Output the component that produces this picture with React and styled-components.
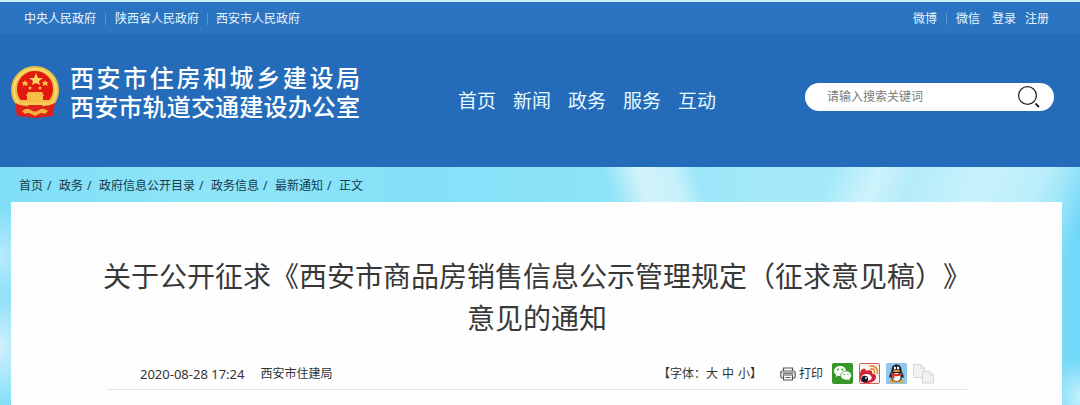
import React from "react";
import styled, { createGlobalStyle } from "styled-components";

const GlobalStyle = createGlobalStyle`
  * {
    box-sizing: border-box;
  }

  body {
    margin: 0;
    font-family: "Noto Sans", "Noto Sans CJK SC", sans-serif;
    font-size: 12px;
    line-height: 18px;
    color: #333333;
    overflow-x: hidden;
    text-spacing-trim: space-all;
  }

  a {
    color: inherit;
    text-decoration: none;
  }
`;

const Page = styled.div`
  min-height: 100vh;
  display: flex;
  flex-direction: column;
`;

const Header = styled.header`
  background-color: #246cba;
  border-top: 2px solid #c9eefb;
  color: #ffffff;
`;

const TopBar = styled.div`
  display: flex;
  justify-content: space-between;
  align-items: center;
  height: 32px;
  padding: 2px 31px 0 24px;
  background-color: #2b74c1;
  color: #e9f6ff;
`;

const TopLinks = styled.nav`
  display: flex;
  align-items: center;
`;

const TopLink = styled.a`
  margin-left: ${props => props.$gap || "0"};
`;

const Separator = styled.span`
  width: 1px;
  height: 12px;
  margin: 0 ${props => (props.$wide ? "9px" : "8px")};
  background-color: #5c96d3;
`;

const Banner = styled.div`
  display: flex;
  align-items: center;
  height: 133px;
  padding: 0 26px 8px 10px;
`;

const Brand = styled.a`
  display: flex;
  align-items: center;
  gap: 10px;
  padding-bottom: 10px;
`;

const BrandNames = styled.div`
  width: 290px;
`;

const BrandName = styled.div`
  font-size: 24px;
  line-height: 29px;
  font-weight: 500;
  text-align: justify;
  text-align-last: justify;
`;

const MainNav = styled.nav`
  display: flex;
  gap: 17px;
  margin-left: 98px;
  padding-top: 8px;
`;

const MainLink = styled.a`
  font-size: 19px;
  line-height: 24px;
  color: #e6fbff;
`;

const SearchForm = styled.form`
  display: flex;
  align-items: center;
  width: 249px;
  height: 28px;
  margin-left: auto;
  padding: 0 14px 0 22px;
  border-radius: 14px;
  background-color: #ffffff;
`;

const SearchInput = styled.input`
  flex: 1;
  min-width: 0;
  padding: 0;
  border: 0;
  outline: 0;
  background: transparent;
  font: inherit;

  &::placeholder {
    color: #7b7b7b;
    opacity: 1;
  }
`;

const PlainButton = styled.button`
  display: flex;
  align-items: center;
  padding: 0;
  border: 0;
  background: none;
  color: inherit;
  font: inherit;
  cursor: pointer;
`;

const Sky = styled.div`
  flex: 1;
  display: flex;
  flex-direction: column;
  padding: 0 18px 0 11px;
  background:
    linear-gradient(70deg, transparent 59%, #d3f2fa 62%, #c6f1fb 65%, transparent 67%),
    linear-gradient(115deg, transparent 70%, #cdf3fb 74%, #b4ecfa 77%, #c9f3fb 83%, #b9eefa 88%, transparent 93%),
    radial-gradient(ellipse 40px 50px at 0 90px, #b6eafd, transparent),
    radial-gradient(ellipse 40px 60px at 0 180px, #d2f0fd, transparent),
    radial-gradient(ellipse 30px 40px at 100% 230px, #c3f0fc, transparent),
    linear-gradient(90deg, #80def7, #8ee5f8 20%, #85e0f7 38%, #8be3f8 55%, #a3e8f9 70%, #a9eaf9 88%, #6fd7f8);
`;

const Breadcrumb = styled.nav`
  display: flex;
  align-items: center;
  height: 35px;
  padding: 2px 8px 0;
  color: #173a4c;
`;

const Slash = styled.span`
  width: 16px;
  padding-left: 4px;
`;

const Article = styled.main`
  flex: 1;
  padding: 53px 95px 16px 96px;
  background-color: #fefefe;
`;

const Title = styled.h1`
  margin: 0 -16px;
  font-size: 28px;
  line-height: 42px;
  font-weight: 400;
  text-align: center;
  color: #383838;
`;

const Meta = styled.div`
  display: flex;
  align-items: center;
  justify-content: space-between;
  height: 32px;
  margin-top: 19px;
  padding: 0 33px;
  border-bottom: 1px solid #e3e3e3;
`;

const MetaGroup = styled.div`
  display: flex;
  align-items: center;
  gap: ${props => props.$gap};
`;

const PublishTime = styled.time`
  font-size: 13px;
`;

const FontSizes = styled.div`
  display: flex;
  margin-right: 12px;
`;

const SizeButton = styled(PlainButton)`
  margin-right: ${props => (props.$last ? "0" : "4px")};
`;

const PrintButton = styled(PlainButton)`
  gap: 3px;
  margin-right: 3px;
`;

const Emblem = () => (
  <svg width="50" height="54" viewBox="0 0 50 54" aria-hidden="true">
    <path d="M6 38 L7 51 L16 52 L25 53 L34 52 L43 51 L44 38Z" fill="#df2118" />
    <circle cx="25" cy="25" r="24" fill="#edbd43" />
    <circle cx="25" cy="25" r="21" fill="none" stroke="#f8dc71" strokeWidth="2" />
    <circle cx="25" cy="24" r="18" fill="#e3180f" />
    <path d="M26 8 L28 13 L33 13 L29 16 L30 20 L26 18 L22 20 L23 16 L19 13 L24 13Z" fill="#fbd45c" />
    <g fill="#f7bd45">
      <path d="M15 15l1 2 2 0-1 2 1 2-3-1-2 1 0-2-1-2 2 0Z" />
      <path d="M35 15l1 2 2 0-1 2 1 2-3-1-2 1 0-2-1-2 2 0Z" />
      <circle cx="20" cy="23" r="1.500" />
      <circle cx="30" cy="23" r="1.500" />
      <path d="M18 27H32L34 31H16ZM17 31H33V35H40L42 40H8L10 35H17Z" />
    </g>
    <path d="M5 38 Q12 42 20 41 L25 38 L30 41 Q38 42 45 38 L43 51 Q35 50 30 52 L25 53 L20 52 Q14 50 7 51Z" fill="#dc2118" />
    <path d="M12 46 Q17 42 21 45 Q25 48 29 45 Q33 42 38 46 L35 49 Q31 47 29 49 L25 51 L21 49 Q18 47 15 49Z" fill="#f0b13e" />
    <path d="M10 39H40" stroke="#f5cc57" strokeWidth="2" />
  </svg>
);

const SearchIcon = () => (
  <svg width="22" height="22" viewBox="0 0 22 22" fill="none" stroke="#222222" aria-hidden="true">
    <circle cx="9.500" cy="9.500" r="8.900" strokeWidth="1.200" />
    <path d="M17.500 17.500L21 21" strokeWidth="1.800" />
  </svg>
);

const PrintIcon = () => (
  <svg width="16" height="14" viewBox="0 0 16 14" fill="none" stroke="#555555" strokeWidth="1.200" aria-hidden="true">
    <path d="M3.500 4V1H12.500V4M3.500 11H2Q.8 11 .8 9.500V6Q.8 4 2.500 4H13.500Q15.200 4 15.200 6V9.500Q15.200 11 14 11H12.500" />
    <path d="M3.500 8H12.500V13H3.500ZM5.500 10.500H10.500M2.500 6.200H13.500" />
  </svg>
);

const WechatIcon = () => (
  <svg width="21" height="21" viewBox="0 0 21 21" aria-hidden="true">
    <rect width="21" height="21" rx="2" fill="#36982b" />
    <path d="M8.200 3C4.500 3 2 5.200 2 8c0 1.700.9 3 2.300 4l-.6 2 2.400-1.200c3.500.8 8-.8 8-4.800 0-2.900-2.500-5-5.900-5Z" fill="#f4fff0" />
    <path d="M14 8c3.200 0 5.500 2 5.500 4.600 0 1.400-.8 2.600-2 3.400l.5 2-2.200-1.100C12 17.700 8.700 15.500 8.700 12.600 8.700 10 11 8 14 8Z" fill="#ffffff" stroke="#36982b" strokeWidth=".7" />
    <g fill="#36982b">
      <circle cx="6" cy="6.500" r=".9" />
      <circle cx="10.300" cy="6.500" r=".9" />
      <circle cx="12.200" cy="11.200" r=".7" />
      <circle cx="16" cy="11.200" r=".7" />
    </g>
  </svg>
);

const WeiboIcon = () => (
  <svg width="21" height="21" viewBox="0 0 21 21" aria-hidden="true">
    <rect x=".5" y=".5" width="20" height="20" rx="1.500" fill="#fff5f0" stroke="#cf5d5a" />
    <path d="M1 12C1 8 3 5 6 6c1 .4 1 1 .8 2 3-1.500 6-1 6.300 1 .1.500 0 1-.1 1.500 3 .4 4 1.600 4 3.500 0 3.500-4 6-9 6C3 20 1 18 1 15Z" fill="#d51f32" />
    <ellipse cx="7.500" cy="14.500" rx="5.200" ry="3.600" fill="#ffffff" />
    <circle cx="5.800" cy="16" r="3.300" fill="#16182b" />
    <circle cx="7" cy="15" r=".9" fill="#ffffff" />
    <path d="M11 3c5-1 8.500 3 7.300 7.500M11.500 6c2.800-.6 4.700 1.300 4 4" fill="none" stroke="#f08a32" strokeWidth="1.700" strokeLinecap="round" />
  </svg>
);

const QQIcon = () => (
  <svg width="21" height="21" viewBox="0 0 21 21" aria-hidden="true">
    <rect width="21" height="21" rx="1.500" fill="#8fc6ee" />
    <ellipse cx="7" cy="18.300" rx="3.500" ry="1.700" fill="#eda22c" />
    <ellipse cx="14" cy="18.300" rx="3.500" ry="1.700" fill="#eda22c" />
    <path d="M10.500 1.500C7 1.500 5.500 4 5.500 7c0 2-2 4-2.300 6.500-.2 1.500.7 1.500 1.700.2C5.500 17 7.500 18.500 10.500 18.500s5-1.500 5.600-4.800c1 1.300 1.900 1.300 1.700-.2C17.500 11 15.500 9 15.500 7c0-3-1.500-5.500-5-5.500Z" fill="#20252c" />
    <ellipse cx="10.500" cy="14" rx="4" ry="4" fill="#ffffff" />
    <ellipse cx="8.900" cy="5" rx="1.100" ry="1.500" fill="#ffffff" />
    <ellipse cx="12.100" cy="5" rx="1.100" ry="1.500" fill="#ffffff" />
    <ellipse cx="10.500" cy="8" rx="3.500" ry="1.100" fill="#eda22c" />
    <path d="M5 9.500Q10.500 12.500 16 9.500V12Q10.500 14 8.500 13V15.500H6.500V12.500L5 12Z" fill="#dc3428" />
  </svg>
);

const CopyIcon = () => (
  <svg width="21" height="21" viewBox="0 0 21 21" fill="#f1f1f1" stroke="#d5d5d5" aria-hidden="true">
    <path d="M.5 1.500H8L11.500 5V14.500H.5Z" />
    <path d="M8 1.500V5H11.500" />
    <path d="M9.500 8.500H17L20.500 12V20H9.500Z" />
    <path d="M17 8.500V12H20.500" />
  </svg>
);

const navItems = ["首页", "新闻", "政务", "服务", "互动"];
const crumbs = ["首页", "政务", "政府信息公开目录", "政务信息", "最新通知"];
const sizes = ["大", "中", "小"];
const shares = [
  { name: "微信", Icon: WechatIcon },
  { name: "微博", Icon: WeiboIcon },
  { name: "QQ", Icon: QQIcon },
  { name: "复制", Icon: CopyIcon }
];

const App = () => {
  return (
    <Page>
      <GlobalStyle />
      <Header>
        <TopBar>
          <TopLinks>
            <TopLink href="#">中央人民政府</TopLink>
            <Separator $wide />
            <TopLink href="#">陕西省人民政府</TopLink>
            <Separator />
            <TopLink href="#">西安市人民政府</TopLink>
          </TopLinks>
          <TopLinks>
            <TopLink href="#">微博</TopLink>
            <Separator $wide />
            <TopLink href="#">微信</TopLink>
            <TopLink href="#" $gap="12px">登录</TopLink>
            <TopLink href="#" $gap="9px">注册</TopLink>
          </TopLinks>
        </TopBar>
        <Banner>
          <Brand href="#">
            <Emblem />
            <BrandNames>
              <BrandName>西安市住房和城乡建设局</BrandName>
              <BrandName>西安市轨道交通建设办公室</BrandName>
            </BrandNames>
          </Brand>
          <MainNav>
            {navItems.map(item => (
              <MainLink href="#" key={item}>{item}</MainLink>
            ))}
          </MainNav>
          <SearchForm onSubmit={e => e.preventDefault()}>
            <SearchInput type="text" aria-label="搜索" placeholder="请输入搜索关键词" />
            <PlainButton type="submit" aria-label="搜索">
              <SearchIcon />
            </PlainButton>
          </SearchForm>
        </Banner>
      </Header>
      <Sky>
        <Breadcrumb>
          {crumbs.map(item => (
            <React.Fragment key={item}>
              <a href="#">{item}</a>
              <Slash>/</Slash>
            </React.Fragment>
          ))}
          <span>正文</span>
        </Breadcrumb>
        <Article>
          <Title>
            关于公开征求《西安市商品房销售信息公示管理规定（征求意见稿）》
            <br />
            意见的通知
          </Title>
          <Meta>
            <MetaGroup $gap="16px">
              <PublishTime dateTime="2020-08-28T17:24">2020-08-28 17:24</PublishTime>
              <span>西安市住建局</span>
            </MetaGroup>
            <MetaGroup $gap="6px">
              <FontSizes>
                <span>【字体：</span>
                {sizes.map((size, i) => (
                  <SizeButton type="button" key={size} $last={i === sizes.length - 1}>
                    {size}
                  </SizeButton>
                ))}
                <span>】</span>
              </FontSizes>
              <PrintButton type="button">
                <PrintIcon />
                打印
              </PrintButton>
              {shares.map(({ name, Icon }) => (
                <PlainButton type="button" aria-label={name} key={name}>
                  <Icon />
                </PlainButton>
              ))}
            </MetaGroup>
          </Meta>
        </Article>
      </Sky>
    </Page>
  );
};

export default App;
